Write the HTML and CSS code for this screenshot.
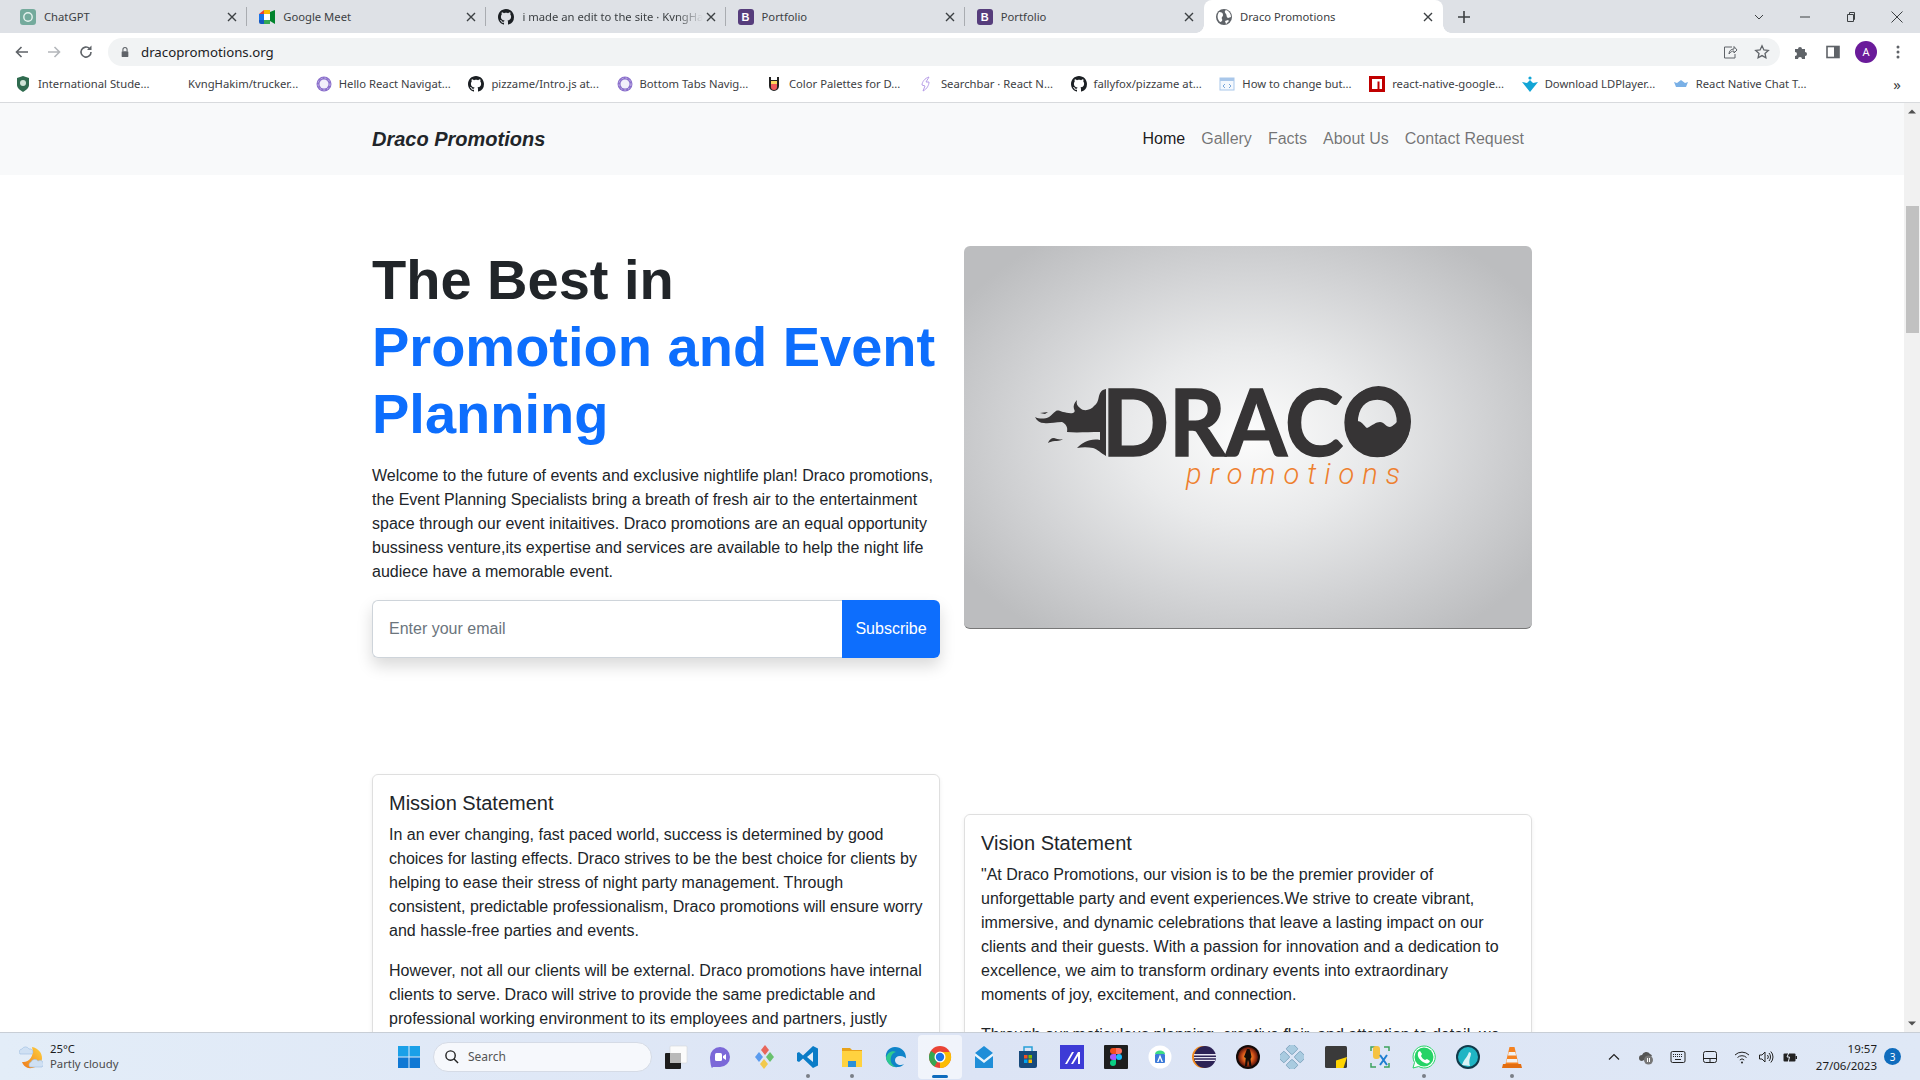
FILE: index.html
```html
<!DOCTYPE html>
<html lang="en">
<head>
    <meta charset="UTF-8">
    <meta name="viewport" content="width=device-width, initial-scale=1.0">
    <title>Draco Promotions</title>
    <link rel="stylesheet" href="styles.css">
</head>
<body>
    <svg class="sprites" width="0" height="0">
        <symbol id="i-github" viewBox="0 0 16 16"><path fill="#1b1f23" d="M8 0C3.58 0 0 3.58 0 8c0 3.54 2.29 6.53 5.47 7.59.4.07.55-.17.55-.38 0-.19-.01-.82-.01-1.49-2.01.37-2.53-.49-2.69-.94-.09-.23-.48-.94-.82-1.13-.28-.15-.68-.52-.01-.53.63-.01 1.08.58 1.23.82.72 1.21 1.87.87 2.33.66.07-.52.28-.87.51-1.07-1.78-.2-3.64-.89-3.64-3.95 0-.87.31-1.59.82-2.15-.08-.2-.36-1.02.08-2.12 0 0 .67-.21 2.2.82.64-.18 1.32-.27 2-.27.68 0 1.36.09 2 .27 1.53-1.04 2.2-.82 2.2-.82.44 1.1.16 1.92.08 2.12.51.56.82 1.27.82 2.15 0 3.07-1.87 3.75-3.65 3.95.29.25.54.73.54 1.48 0 1.07-.01 1.93-.01 2.2 0 .21.15.46.55.38A8.013 8.013 0 0016 8c0-4.42-3.58-8-8-8z"/></symbol>
        <symbol id="i-close" viewBox="0 0 16 16"><path d="M4 4l8 8M12 4l-8 8" stroke="#3c4043" stroke-width="1.4" fill="none"/></symbol>
        <symbol id="i-ring" viewBox="0 0 16 16"><circle cx="8" cy="8" r="7.500" fill="#8a6fcb"/><circle cx="8" cy="8" r="4.500" fill="#f2effa"/><circle cx="8" cy="8" r="6" fill="none" stroke="#c9bbe9" stroke-dasharray="2 2"/></symbol>
        <defs>
            <radialGradient id="g-fire"><stop offset="0" stop-color="#f7c02c"/><stop offset=".55" stop-color="#d9561a"/><stop offset="1" stop-color="#5a1208"/></radialGradient>
            <linearGradient id="g-moon" x1="1" y1="0" x2="0" y2="1"><stop offset="0" stop-color="#ffd23f"/><stop offset="1" stop-color="#ee7a1c"/></linearGradient>
        </defs>
    </svg>

    <!-- Barra de pestanas -->
    <div class="tabstrip">
        <div class="tab">
            <svg class="favicon" viewBox="0 0 16 16"><rect width="16" height="16" rx="3" fill="#74aa9c"/><circle cx="8" cy="8" r="4.2" fill="none" stroke="#e6f2ee" stroke-width="1.4"/></svg>
            <span class="tab-title">ChatGPT</span>
            <svg class="tab-close"><use href="#i-close"/></svg>
        </div>
        <div class="tab">
            <svg class="favicon" viewBox="0 0 16 16"><path d="M0 5l5-4v4z" fill="#ea4335"/><path d="M5 1h6v4H5z" fill="#fbbc04"/><path d="M0 5h5v6H0z" fill="#1a73e8"/><path d="M0 11h5v4H2a2 2 0 0 1-2-2z" fill="#1558c0"/><path d="M5 11h6v4H5z" fill="#34a853"/><path d="M11 3l5-2v14l-5-3z" fill="#00832d"/><path d="M5 5h6v6H5z" fill="#fff"/></svg>
            <span class="tab-title">Google Meet</span>
            <svg class="tab-close"><use href="#i-close"/></svg>
        </div>
        <div class="tab">
            <svg class="favicon"><use href="#i-github"/></svg>
            <span class="tab-title tab-fade">i made an edit to the site · KvngHakim</span>
            <svg class="tab-close"><use href="#i-close"/></svg>
        </div>
        <div class="tab">
            <span class="favicon boot">B</span>
            <span class="tab-title">Portfolio</span>
            <svg class="tab-close"><use href="#i-close"/></svg>
        </div>
        <div class="tab">
            <span class="favicon boot">B</span>
            <span class="tab-title">Portfolio</span>
            <svg class="tab-close"><use href="#i-close"/></svg>
        </div>
        <div class="tab tab-active">
            <svg class="favicon" viewBox="0 0 16 16"><circle cx="8" cy="8" r="8" fill="#5f6368"/><path d="M3 3c3 0 4 1 4 3S5 8 6 10s-1 3-2 3C1 10 1 6 3 3zM10 1c3 1 5 4 5 7l-3 1c-2-1-1-3-2-4s-2-3 0-4zM9 12l3-1 1 1-3 3z" fill="#fff"/></svg>
            <span class="tab-title">Draco Promotions</span>
            <svg class="tab-close"><use href="#i-close"/></svg>
        </div>
        <svg class="tab-new" viewBox="0 0 16 16"><path d="M8 2v12M2 8h12" stroke="#3c4043" stroke-width="1.6"/></svg>
        <div class="win-controls">
            <svg viewBox="0 0 16 16"><path d="M4 6l4 4 4-4" stroke="#3c4043" fill="none"/></svg>
            <svg viewBox="0 0 16 16"><path d="M3 8h10" stroke="#3c4043"/></svg>
            <svg viewBox="0 0 16 16"><path d="M4.500 5.500h6v7h-6zM6.500 5.500v-2h5v7h-1" stroke="#3c4043" fill="none"/></svg>
            <svg viewBox="0 0 16 16"><path d="M2.500 2.500l11 11M13.500 2.500l-11 11" stroke="#3c4043" fill="none"/></svg>
        </div>
    </div>

    <!-- Barra de direcciones -->
    <div class="toolbar">
        <svg class="tool-icon" viewBox="0 0 16 16"><path d="M14 8H3M7.500 3L2.500 8l5 5" stroke="#5f6368" stroke-width="1.6" fill="none"/></svg>
        <svg class="tool-icon" viewBox="0 0 16 16"><path d="M2 8h11M8.500 3l5 5-5 5" stroke="#b4b7bb" stroke-width="1.6" fill="none"/></svg>
        <svg class="tool-icon" viewBox="0 0 16 16"><path d="M13 8a5 5 0 1 1-1.500-3.500" stroke="#5f6368" stroke-width="1.6" fill="none"/><path d="M13.500 1.500v4.500H9z" fill="#5f6368"/></svg>
        <div class="omnibox">
            <svg class="lock" viewBox="0 0 12 14"><path d="M3.500 6V4a2.500 2.500 0 0 1 5 0v2" stroke="#5f6368" stroke-width="1.3" fill="none"/><rect x="2" y="6" width="8" height="7" rx="1" fill="#5f6368"/></svg>
            <span class="url">dracopromotions.org</span>
            <svg class="omni-share" viewBox="0 0 16 16"><path d="M10 3h-7.500v11h10.500v-4M7 10c0-3 2-5 5-5V2.500l3 3.500-3 3V7c-2 0-3.500 1-5 3z" stroke="#5f6368" fill="none"/></svg>
            <svg class="omni-star" viewBox="0 0 16 16"><path d="M8 1.800l1.900 4.100 4.400.5-3.300 3 .9 4.400L8 11.600l-3.900 2.200.9-4.400-3.300-3 4.400-.5z" stroke="#5f6368" stroke-width="1.300" fill="none"/></svg>
        </div>
        <svg class="tool-icon" viewBox="0 0 16 16"><path d="M2 5h3a2 2 0 1 1 4 0h3v3a2 2 0 1 1 0 4v3H9a2 2 0 1 0-4 0H2v-3a2 2 0 1 0 0-4z" fill="#5f6368"/></svg>
        <svg class="tool-icon tool-panel" viewBox="0 0 16 16"><rect x="2" y="2.500" width="12" height="11" fill="none" stroke="#5f6368" stroke-width="1.600"/><rect x="9" y="2.500" width="5" height="11" fill="#5f6368"/></svg>
        <span class="avatar">A</span>
        <svg class="tool-icon" viewBox="0 0 16 16"><circle cx="8" cy="3" r="1.500" fill="#5f6368"/><circle cx="8" cy="8" r="1.500" fill="#5f6368"/><circle cx="8" cy="13" r="1.500" fill="#5f6368"/></svg>
    </div>

    <!-- Marcadores -->
    <div class="bookmarks">
        <div class="bookmark">
            <svg class="favicon" viewBox="0 0 16 16"><path d="M8 0l6 2v7c0 3-3 5-6 7-3-2-6-4-6-7V2z" fill="#2f6b4f"/><circle cx="8" cy="7" r="3" fill="#cfe3d6"/></svg>
            <span>International Stude...</span>
        </div>
        <div class="bookmark bookmark-plain"><span>KvngHakim/trucker...</span></div>
        <div class="bookmark"><svg class="favicon"><use href="#i-ring"/></svg><span>Hello React Navigat...</span></div>
        <div class="bookmark"><svg class="favicon"><use href="#i-github"/></svg><span>pizzame/Intro.js at...</span></div>
        <div class="bookmark"><svg class="favicon"><use href="#i-ring"/></svg><span>Bottom Tabs Navig...</span></div>
        <div class="bookmark">
            <svg class="favicon" viewBox="0 0 16 16"><path d="M3 1h2v3h6V1h2v9a5 5 0 0 1-10 0z" fill="#222"/><path d="M5 5h6v3H5z" fill="#fbd75b"/><path d="M5 8h6v3a3 3 0 0 1-6 0z" fill="#ef5b5b"/></svg>
            <span>Color Palettes for D...</span>
        </div>
        <div class="bookmark">
            <svg class="favicon" viewBox="0 0 16 16"><path d="M11 1C7 2 4 6 4 9l3 1-2 5c4-2 6-6 6-9L8 6z" fill="none" stroke="#b79ee8"/></svg>
            <span>Searchbar · React N...</span>
        </div>
        <div class="bookmark"><svg class="favicon"><use href="#i-github"/></svg><span>fallyfox/pizzame at...</span></div>
        <div class="bookmark">
            <svg class="favicon" viewBox="0 0 16 16"><rect x="1" y="2" width="14" height="12" fill="#f4f8fd" stroke="#a9c7ea"/><path d="M1 2h14v3H1z" fill="#a9c7ea"/><path d="M6 8l-2 2 2 2M10 8l2 2-2 2" stroke="#7aa7d9" fill="none"/></svg>
            <span>How to change but...</span>
        </div>
        <div class="bookmark">
            <svg class="favicon" viewBox="0 0 16 16"><rect width="16" height="16" fill="#c00000"/><path d="M3 3h10v10h-2.500V5.500H8.500V13H3z" fill="#fff"/></svg>
            <span>react-native-google...</span>
        </div>
        <div class="bookmark">
            <svg class="favicon" viewBox="0 0 16 16"><path d="M0 6l5 1 3-3 3 3 5-1-8 10z" fill="#12a5d6"/><circle cx="8" cy="2" r="1.600" fill="#12a5d6"/></svg>
            <span>Download LDPlayer...</span>
        </div>
        <div class="bookmark">
            <svg class="favicon" viewBox="0 0 16 16"><path d="M1 6l3 1 4-3 4 3 3-1-2 5H3z" fill="#7ab0e6"/></svg>
            <span>React Native Chat T...</span>
        </div>
        <span class="more-bookmarks">»</span>
    </div>

    <!-- Pagina -->
    <div class="viewport">
        <div class="page">
            <nav class="navbar">
                <div class="container navbar-row">
                    <a class="brand">Draco Promotions</a>
                    <ul class="nav-links">
                        <li class="nav-active">Home</li>
                        <li>Gallery</li>
                        <li>Facts</li>
                        <li>About Us</li>
                        <li>Contact Request</li>
                    </ul>
                </div>
            </nav>

            <div class="container">
                <section class="hero">
                    <div class="hero-text">
                        <h1>The Best in <span class="accent">Promotion and Event Planning</span></h1>
                        <p>Welcome to the future of events and exclusive nightlife plan! Draco promotions, the Event Planning Specialists bring a breath of fresh air to the entertainment space through our event initaitives. Draco promotions are an equal opportunity bussiness venture,its expertise and services are available to help the night life audiece have a memorable event.</p>
                        <form class="subscribe">
                            <span class="subscribe-input">Enter your email</span>
                            <span class="subscribe-btn">Subscribe</span>
                        </form>
                    </div>
                    <div class="logo-box">
                        <svg viewBox="0 0 568 383" width="568" height="383">
                            <text class="logo-draco" x="138" y="210" textLength="311" lengthAdjust="spacingAndGlyphs">DRACO</text>
                            <!-- llamas a la izquierda de la D -->
                            <path fill="#363435" d="M142 143C137 144 136 147 135 150C134 155 133 158 130 160C127 164 120 166 116 162C113 160 112 157 113 154C110 157 109 160 110 163C111 165 111 166 109 167C105 168 102 166 99 166C96 165 94 164 92 165C89 167 88 169 85 171C81 173 75 173 71 171C73 175 76 177 80 177C85 178 90 176 98 176C102 178 104 181 103 186C112 187 124 186 136 186L136 194C130 193 125 194 121 196C117 198 115 200 113 202C118 201 124 201 129 202C133 203 137 207 142 210Z"/>
                            <path fill="#363435" d="M84 197C85 194 87 192 90 192C93 193 96 194 99 193C96 195 93 195 91 195C88 195 86 196 84 197Z"/>
                            <path fill="#363435" d="M76 167L84 166L81 168Z"/>
                            <!-- relleno de la O -->
                            <path fill="#363435" fill-rule="evenodd" d="M382 175.500a32.500 35.500 0 1 0 65 0a32.500 35.500 0 1 0 -65 0ZM393 175C394 160 404 152 414 152C426 152 435 162 436 174C432 176 430 180 426 181C422 181 420 176 416 176C412 176 409 179 403 182C400 180 398 175 393 175Z"/>
                            <text class="logo-promo" x="222" y="238" textLength="214">promotions</text>
                        </svg>
                    </div>
                </section>

                <section class="statements">
                    <article class="card">
                        <h5>Mission Statement</h5>
                        <p>In an ever changing, fast paced world, success is determined by good choices for lasting effects. Draco strives to be the best choice for clients by helping to ease their stress of night party management. Through consistent, predictable professionalism, Draco promotions will ensure worry and hassle-free parties and events.</p>
                        <p>However, not all our clients will be external. Draco promotions have internal clients to serve. Draco will strive to provide the same predictable and professional working environment to its employees and partners, justly</p>
                    </article>
                    <article class="card card-lower">
                        <h5>Vision Statement</h5>
                        <p>"At Draco Promotions, our vision is to be the premier provider of unforgettable party and event experiences.We strive to create vibrant, immersive, and dynamic celebrations that leave a lasting impact on our clients and their guests. With a passion for innovation and a dedication to excellence, we aim to transform ordinary events into extraordinary moments of joy, excitement, and connection.</p>
                        <p>Through our meticulous planning, creative flair, and attention to detail, we</p>
                    </article>
                </section>
            </div>
        </div>

        <div class="scrollbar">
            <svg class="scroll-arrow" viewBox="0 0 16 16"><path d="M4 10l4-4 4 4z" fill="#505050"/></svg>
            <div class="scroll-thumb"></div>
            <svg class="scroll-arrow scroll-down" viewBox="0 0 16 16"><path d="M4 6l4 4 4-4z" fill="#505050"/></svg>
        </div>
    </div>

    <!-- Barra de tareas -->
    <footer class="taskbar">
        <div class="weather">
            <svg class="weather-icon" viewBox="0 0 24 24"><path d="M13 2C19 3 23.500 8 23 14C22 20 15 24 9 23C6 22 4 20 3 17C9 18 16 12 13 2Z" fill="url(#g-moon)"/><path d="M1 9a3 3 0 0 1 2-5 4 4 0 0 1 7 0 3 3 0 0 1 3 5z" fill="#cfe0f3" stroke="#9dbde0" stroke-width=".6"/><path d="M11 22a3 3 0 0 1 1-5 4 4 0 0 1 7-1 3 3 0 0 1 4 6z" fill="#cfe0f3" stroke="#9dbde0" stroke-width=".6"/></svg>
            <div class="weather-text"><span>25°C</span><span class="weather-sub">Partly cloudy</span></div>
        </div>
        <div class="task-item">
            <svg viewBox="0 0 24 24"><path d="M1 1h10.500v10.500H1z" fill="#1aa0e8"/><path d="M12.500 1H23v10.500H12.500z" fill="#1aa0e8"/><path d="M1 12.500h10.500V23H1z" fill="#0f78d4"/><path d="M12.500 12.500H23V23H12.500z" fill="#0f78d4"/></svg>
        </div>
        <div class="task-search">
            <svg viewBox="0 0 16 16"><circle cx="7" cy="7" r="5" fill="none" stroke="#222" stroke-width="1.500"/><path d="M10.500 10.500L15 15" stroke="#222" stroke-width="1.500"/></svg>
            <span>Search</span>
        </div>
        <div class="task-item">
            <svg viewBox="0 0 24 24"><rect x="6" y="1" width="17" height="17" rx="1" fill="#fbfbfb" stroke="#d4d6da" stroke-width=".6"/><rect x="1" y="8" width="16" height="16" rx="1" fill="#1d1d1d"/><rect x="6" y="8" width="11" height="10" fill="#b9b9b9"/></svg>
        </div>
        <div class="task-item">
            <svg viewBox="0 0 24 24"><path d="M12 2a10 10 0 0 1 0 20H5l-1 1c-1-1-2-7-2-11A10 10 0 0 1 12 2z" fill="#7b68d8"/><rect x="7" y="8" width="7" height="8" rx="1.500" fill="#fff"/><path d="M15 11l3-2v6l-3-2z" fill="#fff"/></svg>
        </div>
        <div class="task-item">
            <svg viewBox="0 0 24 24"><path d="M13 0l4 5-4 5-4-5z" fill="#e8665b"/><path d="M7 7l4 5-4 5-4-5z" fill="#5a9bee"/><path d="M18 7l4 5-4 5-4-5z" fill="#69c16e"/><path d="M12 14l4 5-4 5-4-5z" fill="#f2c94c"/></svg>
        </div>
        <div class="task-item task-open">
            <svg viewBox="0 0 24 24"><path d="M17 1l5 2.500v17L17 23 7 13.500 3 17l-2-1V8l2-1 4 3.500z" fill="#0a7cc7"/><path d="M17 7l-6 5 6 5z" fill="#e2edf8"/></svg>
        </div>
        <div class="task-item task-open">
            <svg viewBox="0 0 24 24"><path d="M2 3h8l2 2h10v3H2z" fill="#e8a21a"/><path d="M2 6h20v16H2z" fill="#ffd23f"/><rect x="8" y="16" width="8" height="6" fill="#2b90d9"/></svg>
        </div>
        <div class="task-item">
            <svg viewBox="0 0 24 24"><path d="M22 13C22 6 17 2 11 2 5 2 1 7 2 13c1 6 7 10 12 9 3 0 5-2 6-3-3 2-9 1-9-4 0-2 2-4 5-4 4 0 6 3 6 2z" fill="#0f84c9"/><path d="M2 13c1-5 6-8 10-6-4 1-6 5-5 10 1 3 3 4 5 5-5 0-9-4-10-9z" fill="#2fc98f"/></svg>
        </div>
        <div class="task-item task-active">
            <svg viewBox="0 0 24 24"><circle cx="12" cy="12" r="11" fill="#ea4335"/><path d="M12 12L2.500 17.500A11 11 0 0 1 3 6z" fill="#34a853"/><path d="M12 23a11 11 0 0 0 10-16H12z" fill="#fbbc04"/><path d="M12 12l-5.500 9.500A11 11 0 0 1 2.500 17.500z" fill="#34a853"/><circle cx="12" cy="12" r="5.500" fill="#fff"/><circle cx="12" cy="12" r="4.200" fill="#1a73e8"/></svg>
        </div>
        <div class="task-item">
            <svg viewBox="0 0 24 24"><path d="M3 8l9-7 9 7v15H3z" fill="#1f8ed8"/><path d="M3 8l9 7 9-7v3l-9 7-9-7z" fill="#e8f4fc"/></svg>
        </div>
        <div class="task-item">
            <svg viewBox="0 0 24 24"><path d="M8 6V2h8v4" fill="none" stroke="#27a0d8" stroke-width="1.500"/><path d="M3 6h18v15a2 2 0 0 1-2 2H5a2 2 0 0 1-2-2z" fill="#174a7c"/><rect x="8" y="10" width="3.500" height="3.500" fill="#f25022"/><rect x="12.500" y="10" width="3.500" height="3.500" fill="#7fba00"/><rect x="8" y="14.500" width="3.500" height="3.500" fill="#00a4ef"/><rect x="12.500" y="14.500" width="3.500" height="3.500" fill="#ffb900"/></svg>
        </div>
        <div class="task-item">
            <svg viewBox="0 0 24 24"><rect width="24" height="24" fill="#3d3bd6"/><path d="M5 19L12 7h2L7 19zM11 19l7-12h2v12h-2v-8l-5 8z" fill="#fff"/></svg>
        </div>
        <div class="task-item">
            <svg viewBox="0 0 24 24"><rect width="24" height="24" rx="1" fill="#1e1e1e"/><circle cx="15" cy="12" r="3" fill="#1abcfe"/><path d="M9 3h3v6H9a3 3 0 0 1 0-6z" fill="#f24e1e"/><path d="M12 3h3a3 3 0 0 1 0 6h-3z" fill="#ff7262"/><path d="M9 9h3v6H9a3 3 0 0 1 0-6z" fill="#a259ff"/><path d="M9 15h3v3a3 3 0 1 1-3-3z" fill="#0acf83"/></svg>
        </div>
        <div class="task-item">
            <svg viewBox="0 0 24 24"><circle cx="12" cy="12" r="11.500" fill="#fff"/><path d="M7 9a5 3.500 0 0 1 10 0z" fill="#3ddc84"/><rect x="7" y="9" width="10" height="9" rx="1" fill="#3c7bd9"/><path d="M12 9.500l3 7.500h-1.500L12 13l-1.500 4H9z" fill="#fff"/></svg>
        </div>
        <div class="task-item">
            <svg viewBox="0 0 24 24"><circle cx="11" cy="12" r="11" fill="#f28a1c"/><circle cx="13" cy="12" r="11" fill="#2c2255"/><path d="M2 9h22v1.500H2zM2 12h22v1.200H2zM3 14.800h20v1.200H3z" fill="#e8e6f2"/></svg>
        </div>
        <div class="task-item">
            <svg viewBox="0 0 24 24"><circle cx="12" cy="12" r="12" fill="#120a08"/><circle cx="12" cy="12" r="10" fill="url(#g-fire)"/><path d="M11 4h2.500l1 3 1 5-1 2 1 7h-2l-1.500-6-1 6H9l.7-8-1.700-1 1.500-4z" fill="#140c08"/></svg>
        </div>
        <div class="task-item">
            <svg viewBox="0 0 24 24"><g transform="rotate(45 12 12)" fill="#a9cbe0" stroke="#6f97b2" stroke-width=".7"><rect x="2" y="2" width="8.500" height="8.500" rx="1"/><rect x="13.500" y="2" width="8.500" height="8.500" rx="1"/><rect x="2" y="13.500" width="8.500" height="8.500" rx="1"/><rect x="13.500" y="13.500" width="8.500" height="8.500" rx="1"/></g></svg>
        </div>
        <div class="task-item">
            <svg viewBox="0 0 24 24"><rect x="1" y="1" width="22" height="22" rx="1.500" fill="#3a3a3a"/><path d="M12 23v-7.500l11-3.500-3.500 11z" fill="#ffd400"/></svg>
        </div>
        <div class="task-item">
            <svg viewBox="0 0 24 24"><path d="M3 6V2h5M16 2h5v4M3 18v4h5M21 18v4h-5" fill="none" stroke="#3da35d" stroke-width="1.500"/><rect x="5" y="1" width="7" height="13" rx="3" fill="#f5c242"/><path d="M12 10l7 10M19 10l-7 10" stroke="#1f7fd1" stroke-width="2"/></svg>
        </div>
        <div class="task-item task-open">
            <svg viewBox="0 0 24 24"><path d="M12 1a11 11 0 0 0-9.500 16.500L1 23l5.700-1.500A11 11 0 1 0 12 1z" fill="#fff" stroke="#25d366" stroke-width="1"/><circle cx="12" cy="12" r="9.500" fill="#25d366"/><path d="M8 6l2 3-1 2c1 2 2 3 4 4l2-1 3 2c-1 3-4 3-7 1s-6-5-5-9c0-1 1-2 2-2z" fill="#fff"/></svg>
        </div>
        <div class="task-item">
            <svg viewBox="0 0 24 24"><circle cx="12" cy="12" r="12" fill="#103a4a"/><circle cx="12" cy="12" r="10" fill="#1fb5c4"/><path d="M6 20c2-6 5-7 7-13l2 1c0 4-3 7-1 13z" fill="#d9f3f6"/></svg>
        </div>
        <div class="task-item task-open">
            <svg viewBox="0 0 24 24"><path d="M9.500 2h5l4 17h-13z" fill="#f58220"/><path d="M8.700 7h6.600l.8 3.500H8z" fill="#f2f2f2"/><path d="M7 14h10l.8 3.500H6.200z" fill="#f2f2f2"/><path d="M3 19h18l1 4H2z" fill="#e36d10"/></svg>
        </div>

        <div class="tray">
            <svg class="tray-icon" viewBox="0 0 16 16"><path d="M3 10.500l5-5 5 5" stroke="#222" stroke-width="1.200" fill="none"/></svg>
            <svg class="tray-icon" viewBox="0 0 16 16"><path d="M4 12a3 3 0 0 1 0-6 4.500 4.500 0 0 1 8-1 3 3 0 0 1 2 2" fill="#555"/><circle cx="10.500" cy="11" r="4.500" fill="#777"/><path d="M9.500 9v4M11.500 9v4" stroke="#fff"/></svg>
            <svg class="tray-icon" viewBox="0 0 16 16"><rect x="1" y="2.500" width="14" height="11" rx="1.500" fill="none" stroke="#222"/><path d="M3 5.500h10M3 7.500h10" stroke="#222" stroke-dasharray="1 1"/><path d="M5 10.500h6" stroke="#222"/></svg>
            <svg class="tray-icon" viewBox="0 0 16 16"><rect x="1.500" y="2.500" width="13" height="11" rx="2" fill="none" stroke="#222"/><path d="M1.500 9.500h13M8 9.500v4" stroke="#222"/></svg>
            <div class="tray-tight">
                <svg class="tray-icon" viewBox="0 0 16 16"><path d="M1 6a10 10 0 0 1 14 0M3.500 8.500a6.500 6.500 0 0 1 9 0M5.800 11a3 3 0 0 1 4.400 0" stroke="#222" fill="none"/><circle cx="8" cy="13.500" r="1" fill="#222"/></svg>
                <svg class="tray-icon" viewBox="0 0 16 16"><path d="M1.500 6v4H4l3 3V3L4 6z" fill="none" stroke="#222"/><path d="M9.500 6a3 3 0 0 1 0 4M11 4a6 6 0 0 1 0 8M12.800 2.500a8 8 0 0 1 0 11" stroke="#222" fill="none"/></svg>
                <svg class="tray-icon" viewBox="0 0 16 16"><rect x="1.500" y="4.500" width="12" height="8" rx="1" fill="#222"/><rect x="13.500" y="7" width="1.500" height="3" fill="#222"/><path d="M8 1L5 8h2.500L6 14" stroke="#e8eef8" fill="none"/></svg>
            </div>
            <div class="clock"><span>19:57</span><span>27/06/2023</span></div>
            <span class="badge">3</span>
        </div>
    </footer>
</body>
</html>
```

FILE: styles.css
```css
* {
    box-sizing: border-box;
}

html, body {
    height: 100%;
}

body {
    margin: 0;
    display: flex;
    flex-direction: column;
    overflow: hidden;
    font-family: "Liberation Sans", Arial, sans-serif;
    font-size: 16px;
    line-height: 24px;
    color: #212529;
    background: #fff;
}

.sprites {
    position: absolute;
}

/* Pestanas */
.tabstrip {
    display: flex;
    align-items: center;
    height: 33px;
    flex: none;
    padding-left: 8px;
    background: #dee1e6;
    font-family: "Noto Sans", sans-serif;
    font-size: 11.25px;
    color: #3c4043;
}

.tab {
    position: relative;
    display: flex;
    align-items: center;
    width: 239.2px;
    height: 33px;
    padding: 0 7px 0 12px;
}

/* Separador corto entre pestanas */
.tab::after {
    content: "";
    position: absolute;
    top: 7px;
    right: 0;
    width: 1px;
    height: 19px;
    background: #a9acb1;
}

.tab:nth-child(5)::after {
    display: none;
}

.tab-active {
    background: #fff;
    border-radius: 8px 8px 0 0;
}

.tab-active::before, .tab-active::after {
    content: "";
    position: absolute;
    top: auto;
    bottom: 0;
    width: 8px;
    height: 8px;
    background: radial-gradient(circle at 0 0, #dee1e6 7.5px, #fff 8px);
}

.tab-active::before {
    left: -8px;
}

.tab-active::after {
    right: -8px;
    background: radial-gradient(circle at 100% 0, #dee1e6 7.5px, #fff 8px);
}

.favicon {
    width: 16px;
    height: 16px;
    flex: none;
}

.boot {
    display: flex;
    align-items: center;
    justify-content: center;
    border-radius: 3px;
    background: #563d7c;
    color: #fff;
    font-family: "Liberation Sans", sans-serif;
    font-size: 11px;
    font-weight: bold;
}

.tab-title {
    flex: 1;
    min-width: 0;
    margin-left: 8px;
    overflow: hidden;
    white-space: nowrap;
}

.tab-fade {
    -webkit-mask-image: linear-gradient(90deg, #000 85%, transparent 100%);
    mask-image: linear-gradient(90deg, #000 85%, transparent 100%);
}

.tab-close {
    width: 16px;
    height: 16px;
    flex: none;
}

.tab-new {
    width: 16px;
    height: 16px;
    margin-left: 13px;
}

.win-controls {
    display: flex;
    align-items: center;
    margin-left: auto;
    padding-right: 15px;
    gap: 30px;
}

.win-controls svg {
    width: 16px;
    height: 16px;
}

/* Direcciones */
.toolbar {
    display: flex;
    align-items: center;
    height: 35px;
    flex: none;
    padding: 2px 14px 0;
    background: #fff;
}

.tool-icon {
    width: 16px;
    height: 16px;
    flex: none;
    margin-right: 16px;
}

.toolbar .tool-icon:last-child {
    margin-right: 0;
}

.tool-panel {
    margin-right: 14px;
}

.omnibox {
    display: flex;
    align-items: center;
    width: 1672px;
    height: 28px;
    flex: none;
    margin: 0 13px 0 -2px;
    padding: 0 10px 0 12px;
    border-radius: 14px;
    background: #f1f3f4;
}

.lock {
    width: 10px;
    height: 12px;
}

.url {
    margin-left: 11px;
    font-family: "Noto Sans", sans-serif;
    font-size: 13.25px;
    color: #202124;
}

.omni-share {
    width: 16px;
    height: 16px;
    margin-left: auto;
}

.omni-star {
    width: 16px;
    height: 16px;
    margin-left: 16px;
}

.avatar {
    display: flex;
    align-items: center;
    justify-content: center;
    width: 22px;
    height: 22px;
    flex: none;
    margin-right: 13px;
    border-radius: 50%;
    background: #6a1b9a;
    color: #fff;
    font-family: "Noto Sans", sans-serif;
    font-size: 11px;
}

/* Marcadores */
.bookmarks {
    display: flex;
    align-items: center;
    height: 35px;
    flex: none;
    padding: 0 0 2px 15px;
    gap: 17.6px;
    border-bottom: 1px solid #d8dadd;
    font-family: "Noto Sans", sans-serif;
    font-size: 11.25px;
    color: #3c4043;
    white-space: nowrap;
}

.bookmark {
    display: flex;
    align-items: center;
    gap: 7px;
}

.bookmark-plain {
    padding-left: 21px;
}

.more-bookmarks {
    margin-left: auto;
    margin-right: 19px;
    font-size: 15px;
}

/* Pagina */
.viewport {
    display: flex;
    flex: 1;
    min-height: 0;
}

.page {
    flex: 1;
    min-width: 0;
    overflow: hidden;
}

.scrollbar {
    position: relative;
    display: flex;
    flex-direction: column;
    align-items: center;
    width: 16px;
    flex: none;
    background: #f1f1f1;
}

.scroll-arrow {
    width: 16px;
    height: 17px;
    flex: none;
}

.scroll-thumb {
    width: 13px;
    height: 127px;
    margin-top: 86px;
    background: #c1c1c1;
}

.scroll-down {
    margin-top: auto;
}

.container {
    width: 1184px;
    margin: 0 auto;
    padding: 0 12px;
}

.navbar {
    height: 72px;
    background: #f8f9fa;
}

.navbar-row {
    display: flex;
    align-items: center;
    justify-content: space-between;
    height: 100%;
}

.brand {
    font-size: 20px;
    font-weight: bold;
    font-style: italic;
}

.nav-links {
    display: flex;
    margin: 0 0 0 auto;
    padding: 0;
    list-style: none;
    color: rgba(0, 0, 0, 0.55);
}

.nav-links li {
    padding: 8px;
}

.nav-active {
    color: rgba(0, 0, 0, 0.9);
}

.hero {
    display: grid;
    grid-template-columns: 1fr 1fr;
    gap: 24px;
    padding-top: 71px;
}

h1 {
    margin: 0 0 16px;
    font-size: 56px;
    line-height: 67.2px;
    font-weight: bold;
}

.accent {
    color: #0d6efd;
}

p {
    margin: 0 0 16px;
}

.subscribe {
    display: flex;
    height: 58px;
    border-radius: 6px;
    box-shadow: 0 8px 16px rgba(0, 0, 0, 0.15);
}

.subscribe-input {
    flex: 1;
    display: flex;
    align-items: center;
    padding: 0 16px;
    border: 1px solid #ced4da;
    border-right: 0;
    border-radius: 6px 0 0 6px;
    color: #6c757d;
}

.subscribe-btn {
    display: flex;
    align-items: center;
    justify-content: center;
    width: 98px;
    border-radius: 0 6px 6px 0;
    background: #0d6efd;
    color: #fff;
}

.logo-box {
    height: 383px;
    border-radius: 6px;
    border-bottom: 1px solid #777;
    overflow: hidden;
    background: radial-gradient(ellipse 60% 64% at 50% 50%, #fcfcfc 0%, #e9eaeb 35%, #d2d3d5 68%, #bcbdbf 100%);
}

.logo-box svg {
    display: block;
}

.logo-draco {
    font-family: Lato, sans-serif;
    font-size: 92px;
    font-weight: bold;
    fill: #363435;
    stroke: #363435;
    stroke-width: 1.5px;
}

.logo-promo {
    font-family: Roboto, sans-serif;
    font-size: 29px;
    font-style: italic;
    font-weight: 300;
    fill: #ee7f2e;
}

.statements {
    display: grid;
    grid-template-columns: 1fr 1fr;
    align-items: start;
    gap: 24px;
    margin-top: 116px;
}

.card {
    padding: 16px;
    border: 1px solid rgba(0, 0, 0, 0.125);
    border-radius: 6px;
    box-shadow: 0 2px 4px rgba(0, 0, 0, 0.075);
}

.card-lower {
    margin-top: 40px;
}

h5 {
    margin: 0 0 8px;
    font-size: 20px;
    line-height: 24px;
    font-weight: normal;
}

/* Barra de tareas */
.taskbar {
    display: flex;
    align-items: center;
    height: 48px;
    flex: none;
    background: linear-gradient(90deg, #e3edf8, #dce4f5 50%, #dfe8f6);
    border-top: 1px solid #c8ced6;
    font-family: "Noto Sans", sans-serif;
    font-size: 12px;
    color: #1c1c1c;
}

.weather {
    display: flex;
    align-items: center;
    width: 387px;
    padding-left: 19px;
    gap: 7px;
    flex: none;
}

.weather-icon {
    width: 24px;
    height: 24px;
}

.weather-text {
    display: flex;
    flex-direction: column;
    margin-top: -1px;
    font-size: 11.3px;
    line-height: 15px;
}

.weather-sub {
    color: #4a4a4a;
}

.task-item {
    position: relative;
    display: flex;
    align-items: center;
    justify-content: center;
    width: 44px;
    height: 44px;
    flex: none;
}

.task-item svg {
    width: 24px;
    height: 24px;
}

.task-open::after, .task-active::after {
    content: "";
    position: absolute;
    bottom: 1px;
    left: 20px;
    width: 4px;
    height: 4px;
    border-radius: 50%;
    background: #7a7f87;
}

.task-active {
    border-radius: 4px;
    background: rgba(255, 255, 255, 0.6);
}

.task-active::after {
    left: 14px;
    width: 16px;
    height: 3px;
    border-radius: 2px;
    background: #0f6cbd;
}

.task-search {
    display: flex;
    align-items: center;
    width: 219px;
    height: 30px;
    margin: 0 2px;
    padding-left: 10px;
    gap: 9px;
    flex: none;
    border-radius: 15px;
    border: 1px solid #d5dbe6;
    background: #f6f8fc;
    color: #555;
}

.task-search svg {
    width: 15px;
    height: 15px;
}

.tray {
    display: flex;
    align-items: center;
    margin-left: auto;
    padding-right: 19px;
    gap: 16px;
}

.tray-icon {
    width: 16px;
    height: 16px;
}

.tray-tight {
    display: flex;
    gap: 8px;
}

.clock {
    display: flex;
    flex-direction: column;
    align-items: flex-end;
    margin-left: 2px;
    margin-right: -9px;
    font-size: 11.500px;
    line-height: 17px;
}

.badge {
    display: flex;
    align-items: center;
    justify-content: center;
    width: 17px;
    height: 17px;
    border-radius: 50%;
    background: #0f6cbd;
    color: #fff;
    font-size: 10px;
}
```
